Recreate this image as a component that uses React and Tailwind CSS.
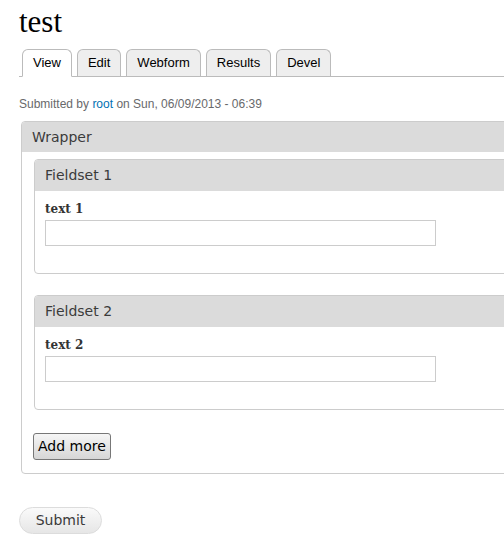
import React from 'react';

const sans = { fontFamily: '"DejaVu Sans", sans-serif' };

const Tab = ({ label, active }) => (
  <li
    className={`h-[27px] px-[10px] flex items-center rounded-t-[6px] border border-[#bbb] text-[13px] text-black ${active ? 'bg-white border-b-white -mb-px h-[28px]' : 'bg-[#eee] border-b-0'}`}
    style={{ fontFamily: '"Liberation Sans", Arial, sans-serif' }}
  >
    {label}
  </li>
);

const Fieldset = ({ legend, label }) => (
  <div className="border border-[#ccc] rounded-[4px] overflow-hidden">
    <div className="h-[31px] bg-[#dbdbdb] pl-[10px] flex items-center text-[14px] text-[#3b3b3b]" style={sans}>
      {legend}
    </div>
    <div className="px-[10px] pt-[10px] pb-[27px]">
      <label className="block text-[12px] font-bold text-[#333] leading-[17px] mb-[2px]" style={{ fontFamily: '"DejaVu Serif", Georgia, serif' }}>
        {label}
      </label>
      <input type="text" className="block w-[391px] h-[26px] border border-[#ccc] bg-white outline-none" />
    </div>
  </div>
);

export default function App() {
  return (
    <div className="w-[504px] h-[546px] overflow-hidden bg-white">
      <div className="w-[580px] pl-[19px] pt-[4px]">
        <h1 className="text-[31px] leading-[36px] text-black" style={{ fontFamily: '"Liberation Serif", Georgia, serif' }}>test</h1>
        <ul className="mt-[9px] flex items-end gap-[5px] pl-[3px] border-b border-[#bbb] h-[28px]">
          <Tab label="View" active />
          <Tab label="Edit" />
          <Tab label="Webform" />
          <Tab label="Results" />
          <Tab label="Devel" />
        </ul>
        <p className="mt-[20px] text-[12px] leading-[15px] text-[#68696b]" style={{ fontFamily: '"Liberation Sans", Arial, sans-serif' }}>
          Submitted by <span className="text-[#0071b3]">root</span> on Sun, 06/09/2013 - 06:39
        </p>
        <div className="mt-[9px] ml-[2px] w-[540px] border border-[#ccc] rounded-[4px] overflow-hidden">
          <div className="h-[30px] bg-[#dbdbdb] pl-[10px] flex items-center text-[14px] text-[#3b3b3b]" style={sans}>
            Wrapper
          </div>
          <div className="pl-[12px] pt-[7px] pb-[13px] flex flex-col">
            <Fieldset legend="Fieldset 1" label="text 1" />
            <div className="mt-[21px]">
              <Fieldset legend="Fieldset 2" label="text 2" />
            </div>
            <button
              type="button"
              className="mt-[23px] -ml-px self-start h-[27px] px-[4px] border border-[#777] rounded-[3px] bg-gradient-to-b from-[#f6f6f6] to-[#d6d6d6] text-[14px] text-black"
              style={sans}
            >
              Add more
            </button>
          </div>
        </div>
        <button
          type="button"
          className="mt-[33px] h-[27px] w-[83px] rounded-full border border-[#dcdcdc] bg-gradient-to-b from-[#fafafa] to-[#e6e6e6] text-[14px] text-[#3a3a3a]"
          style={sans}
        >
          Submit
        </button>
      </div>
    </div>
  );
}
